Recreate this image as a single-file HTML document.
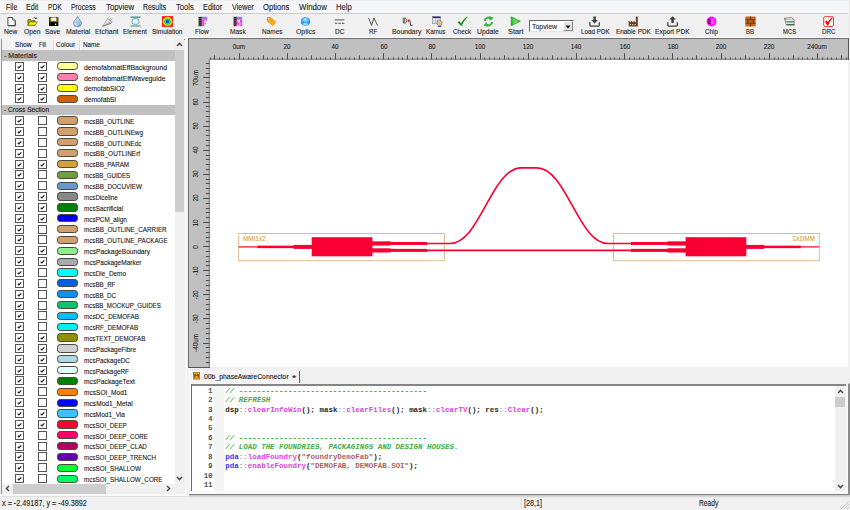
<!DOCTYPE html>
<html><head><meta charset="utf-8"><title>UI</title>
<style>
html,body{margin:0;padding:0}
body{width:850px;height:510px;overflow:hidden;position:relative;background:#f0f0f0;font-family:"Liberation Sans", sans-serif;-webkit-font-smoothing:antialiased}
.t{position:absolute;white-space:nowrap;height:10px;line-height:10px;-webkit-text-stroke:0.1px}
</style></head><body>
<div style="position:absolute;left:0px;top:0px;width:850px;height:13px;background:#f5f6f7"></div>
<div style="position:absolute;left:0px;top:0px;width:850px;height:0.8px;background:#ececec"></div>
<div style="position:absolute;left:0px;top:0px;width:0.8px;height:38px;background:#fbfbfb"></div>
<div style="position:absolute;left:848.6px;top:0px;width:1.4px;height:38px;background:#e6e6e6"></div>
<div style="position:absolute;left:0px;top:13px;width:848px;height:0.9px;background:#cdcdcd"></div>
<div style="position:absolute;left:0px;top:13.9px;width:848.6px;height:24.1px;background:#f0f0f0"></div>
<div style="position:absolute;left:0px;top:36.8px;width:848.6px;height:1px;background:#fafafa"></div>
<svg style="position:absolute;left:5.7px;top:16px" width="11" height="11" viewBox="0 0 11 11"><path d="M1.9 1.5H6.5L9.1 4.1V9.6H1.9Z" fill="#fff" stroke="#3a3a3a" stroke-width="0.9"/><path d="M6.5 1.5V4.1H9.1" fill="#ddd" stroke="#3a3a3a" stroke-width="0.7"/><path d="M2.2 9.9H9.4V4.6" fill="none" stroke="#222" stroke-width="0.5"/></svg>
<svg style="position:absolute;left:26.5px;top:16px" width="11" height="11" viewBox="0 0 11 11"><path d="M0.9 3.6H3.9L4.8 4.6H8.1V9.3H0.9Z" fill="#a8a800" stroke="#4a4a00" stroke-width="0.6"/><path d="M0.9 9.3L2.7 5.9H10.3L8.1 9.3Z" fill="#f4f400" stroke="#5a5a00" stroke-width="0.6"/><path d="M6 2.6C6.8 1.4 8.2 1.3 9 2.3" fill="none" stroke="#222" stroke-width="0.7"/><path d="M9.6 1.2V3H7.9Z" fill="#111"/></svg>
<svg style="position:absolute;left:47.5px;top:16px" width="11" height="11" viewBox="0 0 11 11"><rect x="1" y="1.2" width="9.4" height="8.8" fill="#141400"/><rect x="1.7" y="1.6" width="8" height="4.2" fill="#8a8a00"/><rect x="3.2" y="1.6" width="4.9" height="3.3" fill="#f4f4f4"/><rect x="3" y="6.6" width="5.2" height="3.4" fill="#000"/><rect x="6.9" y="7.6" width="1.2" height="1.5" fill="#e8e8e8"/></svg>
<svg style="position:absolute;left:72.3px;top:16px" width="11" height="11" viewBox="0 0 11 11"><defs><linearGradient id="mg" x1="0" y1="0" x2="1" y2="1"><stop offset="0" stop-color="#dcebfa"/><stop offset="1" stop-color="#7ea9d8"/></linearGradient></defs><ellipse cx="5.6" cy="10.4" rx="3.6" ry="0.6" fill="#bbb"/><path d="M5.5 0.5C6.5 3 9.5 5 9.5 7.3A4 3.3 0 0 1 1.5 7.3C1.5 5 4.5 3 5.5 0.5Z" fill="url(#mg)" stroke="#5682ba" stroke-width="0.7"/><path d="M3.1 7.4A2.3 2 0 0 0 5.2 9.3" stroke="#f4f9ff" stroke-width="0.9" fill="none"/></svg>
<svg style="position:absolute;left:101.5px;top:16px" width="11" height="11" viewBox="0 0 11 11"><path d="M0.6 10.4L5.6 2.4L10.2 5.8L9.2 7.2Z" fill="#e2e2e2" stroke="#8e8e8e" stroke-width="0.6"/><path d="M5.6 2.4L7.4 0.8M7.2 3.6L9 1.6M8.6 4.6L10.4 2.6M2.6 9.2L8.4 6" stroke="#8e8e8e" stroke-width="0.6" fill="none"/><path d="M0.6 10.4L9.2 7.2" stroke="#6a6a6a" stroke-width="0.7"/></svg>
<svg style="position:absolute;left:129.7px;top:16px" width="11" height="11" viewBox="0 0 11 11"><path d="M0.4 1.1H10.6M0.4 10H10.6" stroke="#2f8f8f" stroke-width="1.1"/><rect x="2.1" y="2.8" width="6.8" height="5.4" rx="1.7" fill="#eef8f8" stroke="#4aa6a6" stroke-width="0.9"/></svg>
<svg style="position:absolute;left:161.7px;top:16px" width="11" height="11" viewBox="0 0 11 11"><defs><radialGradient id="rg"><stop offset="0" stop-color="#7a00d0"/><stop offset="0.2" stop-color="#2040ff"/><stop offset="0.38" stop-color="#00c8e0"/><stop offset="0.55" stop-color="#20e020"/><stop offset="0.72" stop-color="#f0f000"/><stop offset="0.88" stop-color="#ff8000"/><stop offset="1" stop-color="#ff1010"/></radialGradient></defs><rect x="0.2" y="0.3" width="10.6" height="10.4" fill="#ff2010"/><rect x="0.2" y="0.3" width="10.6" height="10.4" fill="url(#rg)"/></svg>
<svg style="position:absolute;left:197.7px;top:16px" width="11" height="11" viewBox="0 0 11 11"><rect x="0.6" y="0.8" width="3.2" height="9.4" fill="#222"/><rect x="3.8" y="0.8" width="5.4" height="3" fill="#9a7ae0"/><path d="M1 2.4h2.4M1 4.6h2.4M1 6.8h2.4M1 9h2.4" stroke="#777" stroke-width="0.6"/><text x="3.6" y="10.4" font-family="Liberation Serif" font-weight="bold" font-size="9" fill="#ff10e0">F</text></svg>
<svg style="position:absolute;left:232.5px;top:16px" width="11" height="11" viewBox="0 0 11 11"><rect x="0.6" y="0.8" width="3.2" height="9.4" fill="#222"/><rect x="3.8" y="0.8" width="5.4" height="3" fill="#9a7ae0"/><path d="M1 2.4h2.4M1 4.6h2.4M1 6.8h2.4M1 9h2.4" stroke="#777" stroke-width="0.6"/><text x="1.8" y="10.4" font-family="Liberation Serif" font-weight="bold" font-size="8.6" fill="#ff10e0">M</text></svg>
<svg style="position:absolute;left:266px;top:16px" width="11" height="11" viewBox="0 0 11 11"><path d="M0.8 1H4.8L10.4 6.2L6.6 10.2L0.8 4.6Z" fill="#f5a81c"/><circle cx="2.4" cy="2.6" r="0.8" fill="#f0f0f0"/><path d="M1.6 2.2C0.6 3.6 1.2 5.6 2.6 6.2" stroke="#888" stroke-width="0.5" fill="none"/></svg>
<svg style="position:absolute;left:299.8px;top:16px" width="11" height="11" viewBox="0 0 11 11"><defs><radialGradient id="og" cx="0.5" cy="0.3" r="0.7"><stop offset="0" stop-color="#c8ecff"/><stop offset="0.5" stop-color="#3aa8f0"/><stop offset="1" stop-color="#1488e0"/></radialGradient></defs><ellipse cx="5.5" cy="5.4" rx="4.7" ry="4.4" fill="url(#og)"/><ellipse cx="5.5" cy="8.2" rx="2.6" ry="1.1" fill="#b8e4ff" opacity="0.8"/></svg>
<svg style="position:absolute;left:333.7px;top:16px" width="11" height="11" viewBox="0 0 11 11"><path d="M0.8 3.9H10.3" stroke="#444" stroke-width="0.9"/><path d="M0.8 7.3H3.4M4.3 7.3H6.9M7.8 7.3H10.3" stroke="#444" stroke-width="0.9"/></svg>
<svg style="position:absolute;left:367.6px;top:16px" width="11" height="11" viewBox="0 0 11 11"><path d="M0.6 2L3.6 9.4L5.9 2L9.6 9.4" stroke="#444" stroke-width="0.9" fill="none"/></svg>
<svg style="position:absolute;left:401.5px;top:16px" width="11" height="11" viewBox="0 0 11 11"><path d="M1.3 1.6V7.4M2.7 1.6V7.4M2.7 2C5.4 2.2 5.4 7 2.7 7.2" stroke="#3a3a3a" stroke-width="0.8" fill="none"/><rect x="5.7" y="3.4" width="1.3" height="2.6" fill="#e02020"/><path d="M7.8 3.6L8.6 9.4H10.6" stroke="#333" stroke-width="0.9" fill="none"/></svg>
<svg style="position:absolute;left:431.5px;top:16px" width="11" height="11" viewBox="0 0 11 11"><rect x="0.6" y="0.6" width="7.8" height="7.2" fill="#f4f4f4" stroke="#707070" stroke-width="0.5"/><rect x="0.6" y="0.6" width="7.8" height="1.6" fill="#2424a8"/><path d="M3.6 2.2V7.6M0.8 4.2H8.2M0.8 6H8.2" stroke="#9a9a9a" stroke-width="0.5"/><path d="M5 6.6C5 4.4 6.2 3.6 7 4.2C8 3.4 10.2 5 10 7.4C9.8 9.4 9 10.2 7.4 10C5.8 9.8 5 8.6 5 6.6Z" fill="#d2ca92" stroke="#5e5624" stroke-width="0.5"/><path d="M5.8 10.4H9.4" stroke="#2424a8" stroke-width="0.8"/></svg>
<svg style="position:absolute;left:456.5px;top:16px" width="11" height="11" viewBox="0 0 11 11"><path d="M0.6 6.4L2.2 5L4 7.2C5.6 4.4 7.8 2 10.4 0.4L10.6 0.9C8.4 3.2 6.2 6.4 4.4 10.2Z" fill="#129412"/></svg>
<svg style="position:absolute;left:483.3px;top:16px" width="11" height="11" viewBox="0 0 11 11"><path d="M1.8 5A3.7 3.7 0 0 1 8 2.6" stroke="#3cb03c" stroke-width="2.1" fill="none"/><path d="M6.2 0.2L10.6 1.6L7.6 5Z" fill="#3cb03c"/><path d="M9.2 6A3.7 3.7 0 0 1 3 8.4" stroke="#3cb03c" stroke-width="2.1" fill="none"/><path d="M4.8 10.8L0.4 9.4L3.4 6Z" fill="#3cb03c"/></svg>
<svg style="position:absolute;left:509.9px;top:16px" width="11" height="11" viewBox="0 0 11 11"><defs><linearGradient id="sg" x1="0" y1="0" x2="1" y2="0"><stop offset="0" stop-color="#2cb02c"/><stop offset="0.5" stop-color="#66e866"/><stop offset="1" stop-color="#2cb02c"/></linearGradient></defs><path d="M1.2 0.8L10.2 5.2L1.2 9.8Z" fill="url(#sg)" stroke="#1e9a1e" stroke-width="0.7"/></svg>
<svg style="position:absolute;left:589.2px;top:16px" width="11" height="11" viewBox="0 0 11 11"><path d="M4.4 0.4H6.8V4H8.9L5.6 7.4L2.3 4H4.4Z" fill="#3c3c3c"/><path d="M0.9 6.2V9.2Q0.9 10 1.7 10H9.5Q10.3 10 10.3 9.2V6.2" stroke="#3c3c3c" stroke-width="1.25" fill="none"/></svg>
<svg style="position:absolute;left:628px;top:16px" width="11" height="11" viewBox="0 0 11 11"><path d="M0.6 10.4V4.8L3 6.6V4.8L5.4 6.6V4.8L7.8 6.6V0.6H9.8V10.4Z" fill="#6a3e26"/><path d="M1.8 8.6h1.1M4.2 8.6h1.1M6.6 8.6h1.1" stroke="#f0e4d8" stroke-width="1.1"/></svg>
<svg style="position:absolute;left:666.8px;top:16px" width="11" height="11" viewBox="0 0 11 11"><path d="M4.4 7H6.8V3.6H8.9L5.6 0.2L2.3 3.6H4.4Z" fill="#3c3c3c"/><path d="M0.9 6.2V9.2Q0.9 10 1.7 10H9.5Q10.3 10 10.3 9.2V6.2" stroke="#3c3c3c" stroke-width="1.25" fill="none"/></svg>
<svg style="position:absolute;left:706.1px;top:16px" width="11" height="11" viewBox="0 0 11 11"><circle cx="5.5" cy="5.5" r="4.9" fill="#ff10f0"/><path d="M2 3.6H5M2 5.5H5M2 7.4H5" stroke="#111" stroke-width="1.1"/><path d="M5.2 3.6H8.2M5.2 5.5H8.2M5.2 7.4H8.2" stroke="#ffd0ff" stroke-width="0.7"/></svg>
<svg style="position:absolute;left:744.7px;top:16px" width="11" height="11" viewBox="0 0 11 11"><rect x="0.3" y="0.4" width="10.4" height="10.2" rx="1.2" fill="#c8681a"/><path d="M0.3 3.8H10.7M0.3 7.2H10.7M5.5 0.4V3.8M2.8 3.8V7.2M8.2 3.8V7.2M5.5 7.2V10.6" stroke="#5a2a08" stroke-width="0.8"/></svg>
<svg style="position:absolute;left:783.9px;top:16px" width="11" height="11" viewBox="0 0 11 11"><path d="M0.5 2.3L7.6 1.5L10.2 3.9H2.3Z" fill="#f6f6f6" stroke="#444" stroke-width="0.6"/><path d="M0.5 2.3L2.3 8.6" stroke="#444" stroke-width="0.6"/><rect x="2.3" y="3.9" width="7.9" height="1.3" fill="#fafafa"/><rect x="2.3" y="5.1" width="7.9" height="1.6" fill="#25a64e"/><rect x="2.3" y="6.7" width="7.9" height="1.5" fill="#e4e4e4"/><path d="M2.3 8.8H10.5" stroke="#1a1a1a" stroke-width="1"/><path d="M10.2 3.9V8.6" stroke="#555" stroke-width="0.5"/></svg>
<svg style="position:absolute;left:822.8px;top:16px" width="11" height="11" viewBox="0 0 11 11"><rect x="0.7" y="0.7" width="9.8" height="9.8" rx="1.4" fill="#fff6f6" stroke="#ee3a3a" stroke-width="1"/><path d="M2 5.4L3.6 4.4L4.8 6.2C5.8 4.2 7.6 2.4 9.8 1.2L10 1.8C8.2 3.6 6.4 6.2 5.2 9.4H4.2Z" fill="#e00a0a"/></svg>
<div style="position:absolute;left:529.3px;top:20px;width:45.2px;height:12px;background:#fff;border:1.3px solid #6a6a6a;border-right-color:#e4e4e4;border-bottom-color:#e4e4e4;box-sizing:border-box"></div>
<div style="position:absolute;left:563.2px;top:21.3px;width:10px;height:9.6px;background:#e4e4e4;border:1px solid #fff;border-right-color:#8a8a8a;border-bottom-color:#8a8a8a;box-sizing:border-box"></div>
<svg style="position:absolute;left:565.4px;top:24.6px" width="6" height="4" viewBox="0 0 6 4"><path d="M0.5 0.5h5L3 3.5z" fill="#000"/></svg>
<div style="position:absolute;left:0px;top:38px;width:185px;height:458px;background:#f0f0f0"></div>
<div style="position:absolute;left:1px;top:38.9px;width:184px;height:1px;background:#8a8a8a"></div>
<div style="position:absolute;left:0.9px;top:39px;width:1.3px;height:455px;background:#969696"></div>
<div style="position:absolute;left:2px;top:39px;width:172.5px;height:445px;background:#ffffff"></div>
<div style="position:absolute;left:2px;top:39.9px;width:172.5px;height:10.2px;background:#f2f2f2"></div>
<div style="position:absolute;left:11.6px;top:40.2px;width:0.7px;height:9.6px;background:#dddddd"></div>
<div style="position:absolute;left:12.3px;top:40.2px;width:0.9px;height:9.6px;background:#ffffff"></div>
<div style="position:absolute;left:35.5px;top:40.2px;width:0.7px;height:9.6px;background:#dddddd"></div>
<div style="position:absolute;left:36.2px;top:40.2px;width:0.9px;height:9.6px;background:#ffffff"></div>
<div style="position:absolute;left:52.8px;top:40.2px;width:0.7px;height:9.6px;background:#dddddd"></div>
<div style="position:absolute;left:53.5px;top:40.2px;width:0.9px;height:9.6px;background:#ffffff"></div>
<div style="position:absolute;left:79.4px;top:40.2px;width:0.7px;height:9.6px;background:#dddddd"></div>
<div style="position:absolute;left:80.1px;top:40.2px;width:0.9px;height:9.6px;background:#ffffff"></div>
<div style="position:absolute;left:2px;top:50.4px;width:172.5px;height:10.2px;background:#c0c0c0"></div>
<div style="position:absolute;left:14.7px;top:62px;width:9.3px;height:9px;background:#fff;border:1px solid #555;box-sizing:border-box"></div>
<svg style="position:absolute;left:14.9px;top:62.3px" width="9" height="9" viewBox="0 0 9 9"><path d="M2.7 4.7 L3.9 5.9 L6.3 3.3" stroke="#222" stroke-width="1.25" fill="none"/></svg>
<div style="position:absolute;left:38px;top:62px;width:9.3px;height:9px;background:#fff;border:1px solid #555;box-sizing:border-box"></div>
<svg style="position:absolute;left:38.2px;top:62.3px" width="9" height="9" viewBox="0 0 9 9"><path d="M2.7 4.7 L3.9 5.9 L6.3 3.3" stroke="#222" stroke-width="1.25" fill="none"/></svg>
<div style="position:absolute;left:57.1px;top:62.2px;width:20.7px;height:8.3px;background:#ffff99;border:0.8px solid #4a4a3a;border-radius:3.3px;box-sizing:border-box"></div>
<div style="position:absolute;left:14.7px;top:73px;width:9.3px;height:9px;background:#fff;border:1px solid #555;box-sizing:border-box"></div>
<svg style="position:absolute;left:14.9px;top:73.3px" width="9" height="9" viewBox="0 0 9 9"><path d="M2.7 4.7 L3.9 5.9 L6.3 3.3" stroke="#222" stroke-width="1.25" fill="none"/></svg>
<div style="position:absolute;left:38px;top:73px;width:9.3px;height:9px;background:#fff;border:1px solid #555;box-sizing:border-box"></div>
<svg style="position:absolute;left:38.2px;top:73.3px" width="9" height="9" viewBox="0 0 9 9"><path d="M2.7 4.7 L3.9 5.9 L6.3 3.3" stroke="#222" stroke-width="1.25" fill="none"/></svg>
<div style="position:absolute;left:57.1px;top:73.05px;width:20.7px;height:8.3px;background:#ff80b0;border:0.8px solid #4a4a3a;border-radius:3.3px;box-sizing:border-box"></div>
<div style="position:absolute;left:14.7px;top:84px;width:9.3px;height:9px;background:#fff;border:1px solid #555;box-sizing:border-box"></div>
<svg style="position:absolute;left:14.9px;top:84.3px" width="9" height="9" viewBox="0 0 9 9"><path d="M2.7 4.7 L3.9 5.9 L6.3 3.3" stroke="#222" stroke-width="1.25" fill="none"/></svg>
<div style="position:absolute;left:38px;top:84px;width:9.3px;height:9px;background:#fff;border:1px solid #555;box-sizing:border-box"></div>
<svg style="position:absolute;left:38.2px;top:84.3px" width="9" height="9" viewBox="0 0 9 9"><path d="M2.7 4.7 L3.9 5.9 L6.3 3.3" stroke="#222" stroke-width="1.25" fill="none"/></svg>
<div style="position:absolute;left:57.1px;top:83.9px;width:20.7px;height:8.3px;background:#ffff00;border:0.8px solid #4a4a3a;border-radius:3.3px;box-sizing:border-box"></div>
<div style="position:absolute;left:14.7px;top:94px;width:9.3px;height:9px;background:#fff;border:1px solid #555;box-sizing:border-box"></div>
<svg style="position:absolute;left:14.9px;top:94.3px" width="9" height="9" viewBox="0 0 9 9"><path d="M2.7 4.7 L3.9 5.9 L6.3 3.3" stroke="#222" stroke-width="1.25" fill="none"/></svg>
<div style="position:absolute;left:38px;top:94px;width:9.3px;height:9px;background:#fff;border:1px solid #555;box-sizing:border-box"></div>
<svg style="position:absolute;left:38.2px;top:94.3px" width="9" height="9" viewBox="0 0 9 9"><path d="M2.7 4.7 L3.9 5.9 L6.3 3.3" stroke="#222" stroke-width="1.25" fill="none"/></svg>
<div style="position:absolute;left:57.1px;top:94.75px;width:20.7px;height:8.3px;background:#d06000;border:0.8px solid #4a4a3a;border-radius:3.3px;box-sizing:border-box"></div>
<div style="position:absolute;left:2px;top:104.65px;width:172.5px;height:10.2px;background:#c0c0c0"></div>
<div style="position:absolute;left:14.7px;top:116px;width:9.3px;height:9px;background:#fff;border:1px solid #555;box-sizing:border-box"></div>
<svg style="position:absolute;left:14.9px;top:116.3px" width="9" height="9" viewBox="0 0 9 9"><path d="M2.7 4.7 L3.9 5.9 L6.3 3.3" stroke="#222" stroke-width="1.25" fill="none"/></svg>
<div style="position:absolute;left:38px;top:116px;width:9.3px;height:9px;background:#fff;border:1px solid #555;box-sizing:border-box"></div>
<div style="position:absolute;left:57.1px;top:116.45px;width:20.7px;height:8.3px;background:#d2a06e;border:0.8px solid #4a4a3a;border-radius:3.3px;box-sizing:border-box"></div>
<div style="position:absolute;left:14.7px;top:127px;width:9.3px;height:9px;background:#fff;border:1px solid #555;box-sizing:border-box"></div>
<svg style="position:absolute;left:14.9px;top:127.3px" width="9" height="9" viewBox="0 0 9 9"><path d="M2.7 4.7 L3.9 5.9 L6.3 3.3" stroke="#222" stroke-width="1.25" fill="none"/></svg>
<div style="position:absolute;left:38px;top:127px;width:9.3px;height:9px;background:#fff;border:1px solid #555;box-sizing:border-box"></div>
<div style="position:absolute;left:57.1px;top:127.3px;width:20.7px;height:8.3px;background:#d2a06e;border:0.8px solid #4a4a3a;border-radius:3.3px;box-sizing:border-box"></div>
<div style="position:absolute;left:14.7px;top:138px;width:9.3px;height:9px;background:#fff;border:1px solid #555;box-sizing:border-box"></div>
<svg style="position:absolute;left:14.9px;top:138.3px" width="9" height="9" viewBox="0 0 9 9"><path d="M2.7 4.7 L3.9 5.9 L6.3 3.3" stroke="#222" stroke-width="1.25" fill="none"/></svg>
<div style="position:absolute;left:38px;top:138px;width:9.3px;height:9px;background:#fff;border:1px solid #555;box-sizing:border-box"></div>
<div style="position:absolute;left:57.1px;top:138.15px;width:20.7px;height:8.3px;background:#d2a06e;border:0.8px solid #4a4a3a;border-radius:3.3px;box-sizing:border-box"></div>
<div style="position:absolute;left:14.7px;top:149px;width:9.3px;height:9px;background:#fff;border:1px solid #555;box-sizing:border-box"></div>
<svg style="position:absolute;left:14.9px;top:149.3px" width="9" height="9" viewBox="0 0 9 9"><path d="M2.7 4.7 L3.9 5.9 L6.3 3.3" stroke="#222" stroke-width="1.25" fill="none"/></svg>
<div style="position:absolute;left:38px;top:149px;width:9.3px;height:9px;background:#fff;border:1px solid #555;box-sizing:border-box"></div>
<div style="position:absolute;left:57.1px;top:149px;width:20.7px;height:8.3px;background:#d2a06e;border:0.8px solid #4a4a3a;border-radius:3.3px;box-sizing:border-box"></div>
<div style="position:absolute;left:14.7px;top:160px;width:9.3px;height:9px;background:#fff;border:1px solid #555;box-sizing:border-box"></div>
<svg style="position:absolute;left:14.9px;top:160.3px" width="9" height="9" viewBox="0 0 9 9"><path d="M2.7 4.7 L3.9 5.9 L6.3 3.3" stroke="#222" stroke-width="1.25" fill="none"/></svg>
<div style="position:absolute;left:38px;top:160px;width:9.3px;height:9px;background:#fff;border:1px solid #555;box-sizing:border-box"></div>
<svg style="position:absolute;left:38.2px;top:160.3px" width="9" height="9" viewBox="0 0 9 9"><path d="M2.7 4.7 L3.9 5.9 L6.3 3.3" stroke="#222" stroke-width="1.25" fill="none"/></svg>
<div style="position:absolute;left:57.1px;top:159.85px;width:20.7px;height:8.3px;background:#d4a03c;border:0.8px solid #4a4a3a;border-radius:3.3px;box-sizing:border-box"></div>
<div style="position:absolute;left:14.7px;top:170px;width:9.3px;height:9px;background:#fff;border:1px solid #555;box-sizing:border-box"></div>
<svg style="position:absolute;left:14.9px;top:170.3px" width="9" height="9" viewBox="0 0 9 9"><path d="M2.7 4.7 L3.9 5.9 L6.3 3.3" stroke="#222" stroke-width="1.25" fill="none"/></svg>
<div style="position:absolute;left:38px;top:170px;width:9.3px;height:9px;background:#fff;border:1px solid #555;box-sizing:border-box"></div>
<div style="position:absolute;left:57.1px;top:170.7px;width:20.7px;height:8.3px;background:#6ea03c;border:0.8px solid #4a4a3a;border-radius:3.3px;box-sizing:border-box"></div>
<div style="position:absolute;left:14.7px;top:181px;width:9.3px;height:9px;background:#fff;border:1px solid #555;box-sizing:border-box"></div>
<svg style="position:absolute;left:14.9px;top:181.3px" width="9" height="9" viewBox="0 0 9 9"><path d="M2.7 4.7 L3.9 5.9 L6.3 3.3" stroke="#222" stroke-width="1.25" fill="none"/></svg>
<div style="position:absolute;left:38px;top:181px;width:9.3px;height:9px;background:#fff;border:1px solid #555;box-sizing:border-box"></div>
<div style="position:absolute;left:57.1px;top:181.55px;width:20.7px;height:8.3px;background:#6699cc;border:0.8px solid #4a4a3a;border-radius:3.3px;box-sizing:border-box"></div>
<div style="position:absolute;left:14.7px;top:192px;width:9.3px;height:9px;background:#fff;border:1px solid #555;box-sizing:border-box"></div>
<svg style="position:absolute;left:14.9px;top:192.3px" width="9" height="9" viewBox="0 0 9 9"><path d="M2.7 4.7 L3.9 5.9 L6.3 3.3" stroke="#222" stroke-width="1.25" fill="none"/></svg>
<div style="position:absolute;left:38px;top:192px;width:9.3px;height:9px;background:#fff;border:1px solid #555;box-sizing:border-box"></div>
<svg style="position:absolute;left:38.2px;top:192.3px" width="9" height="9" viewBox="0 0 9 9"><path d="M2.7 4.7 L3.9 5.9 L6.3 3.3" stroke="#222" stroke-width="1.25" fill="none"/></svg>
<div style="position:absolute;left:57.1px;top:192.4px;width:20.7px;height:8.3px;background:#888888;border:0.8px solid #4a4a3a;border-radius:3.3px;box-sizing:border-box"></div>
<div style="position:absolute;left:14.7px;top:203px;width:9.3px;height:9px;background:#fff;border:1px solid #555;box-sizing:border-box"></div>
<svg style="position:absolute;left:14.9px;top:203.3px" width="9" height="9" viewBox="0 0 9 9"><path d="M2.7 4.7 L3.9 5.9 L6.3 3.3" stroke="#222" stroke-width="1.25" fill="none"/></svg>
<div style="position:absolute;left:38px;top:203px;width:9.3px;height:9px;background:#fff;border:1px solid #555;box-sizing:border-box"></div>
<svg style="position:absolute;left:38.2px;top:203.3px" width="9" height="9" viewBox="0 0 9 9"><path d="M2.7 4.7 L3.9 5.9 L6.3 3.3" stroke="#222" stroke-width="1.25" fill="none"/></svg>
<div style="position:absolute;left:57.1px;top:203.25px;width:20.7px;height:8.3px;background:#008000;border:0.8px solid #4a4a3a;border-radius:3.3px;box-sizing:border-box"></div>
<div style="position:absolute;left:14.7px;top:214px;width:9.3px;height:9px;background:#fff;border:1px solid #555;box-sizing:border-box"></div>
<svg style="position:absolute;left:14.9px;top:214.3px" width="9" height="9" viewBox="0 0 9 9"><path d="M2.7 4.7 L3.9 5.9 L6.3 3.3" stroke="#222" stroke-width="1.25" fill="none"/></svg>
<div style="position:absolute;left:38px;top:214px;width:9.3px;height:9px;background:#fff;border:1px solid #555;box-sizing:border-box"></div>
<svg style="position:absolute;left:38.2px;top:214.3px" width="9" height="9" viewBox="0 0 9 9"><path d="M2.7 4.7 L3.9 5.9 L6.3 3.3" stroke="#222" stroke-width="1.25" fill="none"/></svg>
<div style="position:absolute;left:57.1px;top:214.1px;width:20.7px;height:8.3px;background:#0000ee;border:0.8px solid #4a4a3a;border-radius:3.3px;box-sizing:border-box"></div>
<div style="position:absolute;left:14.7px;top:225px;width:9.3px;height:9px;background:#fff;border:1px solid #555;box-sizing:border-box"></div>
<svg style="position:absolute;left:14.9px;top:225.3px" width="9" height="9" viewBox="0 0 9 9"><path d="M2.7 4.7 L3.9 5.9 L6.3 3.3" stroke="#222" stroke-width="1.25" fill="none"/></svg>
<div style="position:absolute;left:38px;top:225px;width:9.3px;height:9px;background:#fff;border:1px solid #555;box-sizing:border-box"></div>
<div style="position:absolute;left:57.1px;top:224.95px;width:20.7px;height:8.3px;background:#d2a06e;border:0.8px solid #4a4a3a;border-radius:3.3px;box-sizing:border-box"></div>
<div style="position:absolute;left:14.7px;top:235px;width:9.3px;height:9px;background:#fff;border:1px solid #555;box-sizing:border-box"></div>
<svg style="position:absolute;left:14.9px;top:235.3px" width="9" height="9" viewBox="0 0 9 9"><path d="M2.7 4.7 L3.9 5.9 L6.3 3.3" stroke="#222" stroke-width="1.25" fill="none"/></svg>
<div style="position:absolute;left:38px;top:235px;width:9.3px;height:9px;background:#fff;border:1px solid #555;box-sizing:border-box"></div>
<div style="position:absolute;left:57.1px;top:235.8px;width:20.7px;height:8.3px;background:#d2a06e;border:0.8px solid #4a4a3a;border-radius:3.3px;box-sizing:border-box"></div>
<div style="position:absolute;left:14.7px;top:246px;width:9.3px;height:9px;background:#fff;border:1px solid #555;box-sizing:border-box"></div>
<svg style="position:absolute;left:14.9px;top:246.3px" width="9" height="9" viewBox="0 0 9 9"><path d="M2.7 4.7 L3.9 5.9 L6.3 3.3" stroke="#222" stroke-width="1.25" fill="none"/></svg>
<div style="position:absolute;left:38px;top:246px;width:9.3px;height:9px;background:#fff;border:1px solid #555;box-sizing:border-box"></div>
<svg style="position:absolute;left:38.2px;top:246.3px" width="9" height="9" viewBox="0 0 9 9"><path d="M2.7 4.7 L3.9 5.9 L6.3 3.3" stroke="#222" stroke-width="1.25" fill="none"/></svg>
<div style="position:absolute;left:57.1px;top:246.65px;width:20.7px;height:8.3px;background:#90ee90;border:0.8px solid #4a4a3a;border-radius:3.3px;box-sizing:border-box"></div>
<div style="position:absolute;left:14.7px;top:257px;width:9.3px;height:9px;background:#fff;border:1px solid #555;box-sizing:border-box"></div>
<svg style="position:absolute;left:14.9px;top:257.3px" width="9" height="9" viewBox="0 0 9 9"><path d="M2.7 4.7 L3.9 5.9 L6.3 3.3" stroke="#222" stroke-width="1.25" fill="none"/></svg>
<div style="position:absolute;left:38px;top:257px;width:9.3px;height:9px;background:#fff;border:1px solid #555;box-sizing:border-box"></div>
<svg style="position:absolute;left:38.2px;top:257.3px" width="9" height="9" viewBox="0 0 9 9"><path d="M2.7 4.7 L3.9 5.9 L6.3 3.3" stroke="#222" stroke-width="1.25" fill="none"/></svg>
<div style="position:absolute;left:57.1px;top:257.5px;width:20.7px;height:8.3px;background:#aaaaaa;border:0.8px solid #4a4a3a;border-radius:3.3px;box-sizing:border-box"></div>
<div style="position:absolute;left:14.7px;top:268px;width:9.3px;height:9px;background:#fff;border:1px solid #555;box-sizing:border-box"></div>
<svg style="position:absolute;left:14.9px;top:268.3px" width="9" height="9" viewBox="0 0 9 9"><path d="M2.7 4.7 L3.9 5.9 L6.3 3.3" stroke="#222" stroke-width="1.25" fill="none"/></svg>
<div style="position:absolute;left:38px;top:268px;width:9.3px;height:9px;background:#fff;border:1px solid #555;box-sizing:border-box"></div>
<div style="position:absolute;left:57.1px;top:268.35px;width:20.7px;height:8.3px;background:#00ffff;border:0.8px solid #4a4a3a;border-radius:3.3px;box-sizing:border-box"></div>
<div style="position:absolute;left:14.7px;top:279px;width:9.3px;height:9px;background:#fff;border:1px solid #555;box-sizing:border-box"></div>
<svg style="position:absolute;left:14.9px;top:279.3px" width="9" height="9" viewBox="0 0 9 9"><path d="M2.7 4.7 L3.9 5.9 L6.3 3.3" stroke="#222" stroke-width="1.25" fill="none"/></svg>
<div style="position:absolute;left:38px;top:279px;width:9.3px;height:9px;background:#fff;border:1px solid #555;box-sizing:border-box"></div>
<div style="position:absolute;left:57.1px;top:279.2px;width:20.7px;height:8.3px;background:#0060e0;border:0.8px solid #4a4a3a;border-radius:3.3px;box-sizing:border-box"></div>
<div style="position:absolute;left:14.7px;top:290px;width:9.3px;height:9px;background:#fff;border:1px solid #555;box-sizing:border-box"></div>
<svg style="position:absolute;left:14.9px;top:290.3px" width="9" height="9" viewBox="0 0 9 9"><path d="M2.7 4.7 L3.9 5.9 L6.3 3.3" stroke="#222" stroke-width="1.25" fill="none"/></svg>
<div style="position:absolute;left:38px;top:290px;width:9.3px;height:9px;background:#fff;border:1px solid #555;box-sizing:border-box"></div>
<div style="position:absolute;left:57.1px;top:290.05px;width:20.7px;height:8.3px;background:#1090f0;border:0.8px solid #4a4a3a;border-radius:3.3px;box-sizing:border-box"></div>
<div style="position:absolute;left:14.7px;top:301px;width:9.3px;height:9px;background:#fff;border:1px solid #555;box-sizing:border-box"></div>
<svg style="position:absolute;left:14.9px;top:301.3px" width="9" height="9" viewBox="0 0 9 9"><path d="M2.7 4.7 L3.9 5.9 L6.3 3.3" stroke="#222" stroke-width="1.25" fill="none"/></svg>
<div style="position:absolute;left:38px;top:301px;width:9.3px;height:9px;background:#fff;border:1px solid #555;box-sizing:border-box"></div>
<div style="position:absolute;left:57.1px;top:300.9px;width:20.7px;height:8.3px;background:#10c070;border:0.8px solid #4a4a3a;border-radius:3.3px;box-sizing:border-box"></div>
<div style="position:absolute;left:14.7px;top:311px;width:9.3px;height:9px;background:#fff;border:1px solid #555;box-sizing:border-box"></div>
<svg style="position:absolute;left:14.9px;top:311.3px" width="9" height="9" viewBox="0 0 9 9"><path d="M2.7 4.7 L3.9 5.9 L6.3 3.3" stroke="#222" stroke-width="1.25" fill="none"/></svg>
<div style="position:absolute;left:38px;top:311px;width:9.3px;height:9px;background:#fff;border:1px solid #555;box-sizing:border-box"></div>
<div style="position:absolute;left:57.1px;top:311.75px;width:20.7px;height:8.3px;background:#00c0ff;border:0.8px solid #4a4a3a;border-radius:3.3px;box-sizing:border-box"></div>
<div style="position:absolute;left:14.7px;top:322px;width:9.3px;height:9px;background:#fff;border:1px solid #555;box-sizing:border-box"></div>
<svg style="position:absolute;left:14.9px;top:322.3px" width="9" height="9" viewBox="0 0 9 9"><path d="M2.7 4.7 L3.9 5.9 L6.3 3.3" stroke="#222" stroke-width="1.25" fill="none"/></svg>
<div style="position:absolute;left:38px;top:322px;width:9.3px;height:9px;background:#fff;border:1px solid #555;box-sizing:border-box"></div>
<div style="position:absolute;left:57.1px;top:322.6px;width:20.7px;height:8.3px;background:#00f0f0;border:0.8px solid #4a4a3a;border-radius:3.3px;box-sizing:border-box"></div>
<div style="position:absolute;left:14.7px;top:333px;width:9.3px;height:9px;background:#fff;border:1px solid #555;box-sizing:border-box"></div>
<svg style="position:absolute;left:14.9px;top:333.3px" width="9" height="9" viewBox="0 0 9 9"><path d="M2.7 4.7 L3.9 5.9 L6.3 3.3" stroke="#222" stroke-width="1.25" fill="none"/></svg>
<div style="position:absolute;left:38px;top:333px;width:9.3px;height:9px;background:#fff;border:1px solid #555;box-sizing:border-box"></div>
<svg style="position:absolute;left:38.2px;top:333.3px" width="9" height="9" viewBox="0 0 9 9"><path d="M2.7 4.7 L3.9 5.9 L6.3 3.3" stroke="#222" stroke-width="1.25" fill="none"/></svg>
<div style="position:absolute;left:57.1px;top:333.45px;width:20.7px;height:8.3px;background:#909000;border:0.8px solid #4a4a3a;border-radius:3.3px;box-sizing:border-box"></div>
<div style="position:absolute;left:14.7px;top:344px;width:9.3px;height:9px;background:#fff;border:1px solid #555;box-sizing:border-box"></div>
<svg style="position:absolute;left:14.9px;top:344.3px" width="9" height="9" viewBox="0 0 9 9"><path d="M2.7 4.7 L3.9 5.9 L6.3 3.3" stroke="#222" stroke-width="1.25" fill="none"/></svg>
<div style="position:absolute;left:38px;top:344px;width:9.3px;height:9px;background:#fff;border:1px solid #555;box-sizing:border-box"></div>
<svg style="position:absolute;left:38.2px;top:344.3px" width="9" height="9" viewBox="0 0 9 9"><path d="M2.7 4.7 L3.9 5.9 L6.3 3.3" stroke="#222" stroke-width="1.25" fill="none"/></svg>
<div style="position:absolute;left:57.1px;top:344.3px;width:20.7px;height:8.3px;background:#d0d0d0;border:0.8px solid #4a4a3a;border-radius:3.3px;box-sizing:border-box"></div>
<div style="position:absolute;left:14.7px;top:355px;width:9.3px;height:9px;background:#fff;border:1px solid #555;box-sizing:border-box"></div>
<svg style="position:absolute;left:14.9px;top:355.3px" width="9" height="9" viewBox="0 0 9 9"><path d="M2.7 4.7 L3.9 5.9 L6.3 3.3" stroke="#222" stroke-width="1.25" fill="none"/></svg>
<div style="position:absolute;left:38px;top:355px;width:9.3px;height:9px;background:#fff;border:1px solid #555;box-sizing:border-box"></div>
<svg style="position:absolute;left:38.2px;top:355.3px" width="9" height="9" viewBox="0 0 9 9"><path d="M2.7 4.7 L3.9 5.9 L6.3 3.3" stroke="#222" stroke-width="1.25" fill="none"/></svg>
<div style="position:absolute;left:57.1px;top:355.15px;width:20.7px;height:8.3px;background:#add8e6;border:0.8px solid #4a4a3a;border-radius:3.3px;box-sizing:border-box"></div>
<div style="position:absolute;left:14.7px;top:366px;width:9.3px;height:9px;background:#fff;border:1px solid #555;box-sizing:border-box"></div>
<svg style="position:absolute;left:14.9px;top:366.3px" width="9" height="9" viewBox="0 0 9 9"><path d="M2.7 4.7 L3.9 5.9 L6.3 3.3" stroke="#222" stroke-width="1.25" fill="none"/></svg>
<div style="position:absolute;left:38px;top:366px;width:9.3px;height:9px;background:#fff;border:1px solid #555;box-sizing:border-box"></div>
<svg style="position:absolute;left:38.2px;top:366.3px" width="9" height="9" viewBox="0 0 9 9"><path d="M2.7 4.7 L3.9 5.9 L6.3 3.3" stroke="#222" stroke-width="1.25" fill="none"/></svg>
<div style="position:absolute;left:57.1px;top:366px;width:20.7px;height:8.3px;background:#e0ffff;border:0.8px solid #4a4a3a;border-radius:3.3px;box-sizing:border-box"></div>
<div style="position:absolute;left:14.7px;top:376px;width:9.3px;height:9px;background:#fff;border:1px solid #555;box-sizing:border-box"></div>
<svg style="position:absolute;left:14.9px;top:376.3px" width="9" height="9" viewBox="0 0 9 9"><path d="M2.7 4.7 L3.9 5.9 L6.3 3.3" stroke="#222" stroke-width="1.25" fill="none"/></svg>
<div style="position:absolute;left:38px;top:376px;width:9.3px;height:9px;background:#fff;border:1px solid #555;box-sizing:border-box"></div>
<svg style="position:absolute;left:38.2px;top:376.3px" width="9" height="9" viewBox="0 0 9 9"><path d="M2.7 4.7 L3.9 5.9 L6.3 3.3" stroke="#222" stroke-width="1.25" fill="none"/></svg>
<div style="position:absolute;left:57.1px;top:376.85px;width:20.7px;height:8.3px;background:#008000;border:0.8px solid #4a4a3a;border-radius:3.3px;box-sizing:border-box"></div>
<div style="position:absolute;left:14.7px;top:387px;width:9.3px;height:9px;background:#fff;border:1px solid #555;box-sizing:border-box"></div>
<svg style="position:absolute;left:14.9px;top:387.3px" width="9" height="9" viewBox="0 0 9 9"><path d="M2.7 4.7 L3.9 5.9 L6.3 3.3" stroke="#222" stroke-width="1.25" fill="none"/></svg>
<div style="position:absolute;left:38px;top:387px;width:9.3px;height:9px;background:#fff;border:1px solid #555;box-sizing:border-box"></div>
<div style="position:absolute;left:57.1px;top:387.7px;width:20.7px;height:8.3px;background:#ff8000;border:0.8px solid #4a4a3a;border-radius:3.3px;box-sizing:border-box"></div>
<div style="position:absolute;left:14.7px;top:398px;width:9.3px;height:9px;background:#fff;border:1px solid #555;box-sizing:border-box"></div>
<svg style="position:absolute;left:14.9px;top:398.3px" width="9" height="9" viewBox="0 0 9 9"><path d="M2.7 4.7 L3.9 5.9 L6.3 3.3" stroke="#222" stroke-width="1.25" fill="none"/></svg>
<div style="position:absolute;left:38px;top:398px;width:9.3px;height:9px;background:#fff;border:1px solid #555;box-sizing:border-box"></div>
<div style="position:absolute;left:57.1px;top:398.55px;width:20.7px;height:8.3px;background:#0000ff;border:0.8px solid #4a4a3a;border-radius:3.3px;box-sizing:border-box"></div>
<div style="position:absolute;left:14.7px;top:409px;width:9.3px;height:9px;background:#fff;border:1px solid #555;box-sizing:border-box"></div>
<svg style="position:absolute;left:14.9px;top:409.3px" width="9" height="9" viewBox="0 0 9 9"><path d="M2.7 4.7 L3.9 5.9 L6.3 3.3" stroke="#222" stroke-width="1.25" fill="none"/></svg>
<div style="position:absolute;left:38px;top:409px;width:9.3px;height:9px;background:#fff;border:1px solid #555;box-sizing:border-box"></div>
<svg style="position:absolute;left:38.2px;top:409.3px" width="9" height="9" viewBox="0 0 9 9"><path d="M2.7 4.7 L3.9 5.9 L6.3 3.3" stroke="#222" stroke-width="1.25" fill="none"/></svg>
<div style="position:absolute;left:57.1px;top:409.4px;width:20.7px;height:8.3px;background:#40c0ff;border:0.8px solid #4a4a3a;border-radius:3.3px;box-sizing:border-box"></div>
<div style="position:absolute;left:14.7px;top:420px;width:9.3px;height:9px;background:#fff;border:1px solid #555;box-sizing:border-box"></div>
<svg style="position:absolute;left:14.9px;top:420.3px" width="9" height="9" viewBox="0 0 9 9"><path d="M2.7 4.7 L3.9 5.9 L6.3 3.3" stroke="#222" stroke-width="1.25" fill="none"/></svg>
<div style="position:absolute;left:38px;top:420px;width:9.3px;height:9px;background:#fff;border:1px solid #555;box-sizing:border-box"></div>
<svg style="position:absolute;left:38.2px;top:420.3px" width="9" height="9" viewBox="0 0 9 9"><path d="M2.7 4.7 L3.9 5.9 L6.3 3.3" stroke="#222" stroke-width="1.25" fill="none"/></svg>
<div style="position:absolute;left:57.1px;top:420.25px;width:20.7px;height:8.3px;background:#ff0033;border:0.8px solid #4a4a3a;border-radius:3.3px;box-sizing:border-box"></div>
<div style="position:absolute;left:14.7px;top:431px;width:9.3px;height:9px;background:#fff;border:1px solid #555;box-sizing:border-box"></div>
<svg style="position:absolute;left:14.9px;top:431.3px" width="9" height="9" viewBox="0 0 9 9"><path d="M2.7 4.7 L3.9 5.9 L6.3 3.3" stroke="#222" stroke-width="1.25" fill="none"/></svg>
<div style="position:absolute;left:38px;top:431px;width:9.3px;height:9px;background:#fff;border:1px solid #555;box-sizing:border-box"></div>
<div style="position:absolute;left:57.1px;top:431.1px;width:20.7px;height:8.3px;background:#ff0066;border:0.8px solid #4a4a3a;border-radius:3.3px;box-sizing:border-box"></div>
<div style="position:absolute;left:14.7px;top:442px;width:9.3px;height:9px;background:#fff;border:1px solid #555;box-sizing:border-box"></div>
<svg style="position:absolute;left:14.9px;top:442.3px" width="9" height="9" viewBox="0 0 9 9"><path d="M2.7 4.7 L3.9 5.9 L6.3 3.3" stroke="#222" stroke-width="1.25" fill="none"/></svg>
<div style="position:absolute;left:38px;top:442px;width:9.3px;height:9px;background:#fff;border:1px solid #555;box-sizing:border-box"></div>
<div style="position:absolute;left:57.1px;top:441.95px;width:20.7px;height:8.3px;background:#b00060;border:0.8px solid #4a4a3a;border-radius:3.3px;box-sizing:border-box"></div>
<div style="position:absolute;left:14.7px;top:452px;width:9.3px;height:9px;background:#fff;border:1px solid #555;box-sizing:border-box"></div>
<svg style="position:absolute;left:14.9px;top:452.3px" width="9" height="9" viewBox="0 0 9 9"><path d="M2.7 4.7 L3.9 5.9 L6.3 3.3" stroke="#222" stroke-width="1.25" fill="none"/></svg>
<div style="position:absolute;left:38px;top:452px;width:9.3px;height:9px;background:#fff;border:1px solid #555;box-sizing:border-box"></div>
<div style="position:absolute;left:57.1px;top:452.8px;width:20.7px;height:8.3px;background:#6000b0;border:0.8px solid #4a4a3a;border-radius:3.3px;box-sizing:border-box"></div>
<div style="position:absolute;left:14.7px;top:463px;width:9.3px;height:9px;background:#fff;border:1px solid #555;box-sizing:border-box"></div>
<svg style="position:absolute;left:14.9px;top:463.3px" width="9" height="9" viewBox="0 0 9 9"><path d="M2.7 4.7 L3.9 5.9 L6.3 3.3" stroke="#222" stroke-width="1.25" fill="none"/></svg>
<div style="position:absolute;left:38px;top:463px;width:9.3px;height:9px;background:#fff;border:1px solid #555;box-sizing:border-box"></div>
<div style="position:absolute;left:57.1px;top:463.65px;width:20.7px;height:8.3px;background:#00ff33;border:0.8px solid #4a4a3a;border-radius:3.3px;box-sizing:border-box"></div>
<div style="position:absolute;left:14.7px;top:474px;width:9.3px;height:9px;background:#fff;border:1px solid #555;box-sizing:border-box"></div>
<svg style="position:absolute;left:14.9px;top:474.3px" width="9" height="9" viewBox="0 0 9 9"><path d="M2.7 4.7 L3.9 5.9 L6.3 3.3" stroke="#222" stroke-width="1.25" fill="none"/></svg>
<div style="position:absolute;left:38px;top:474px;width:9.3px;height:9px;background:#fff;border:1px solid #555;box-sizing:border-box"></div>
<div style="position:absolute;left:57.1px;top:474.5px;width:20.7px;height:8.3px;background:#00ff66;border:0.8px solid #4a4a3a;border-radius:3.3px;box-sizing:border-box"></div>
<div style="position:absolute;left:174.5px;top:39px;width:9.5px;height:445px;background:#f0f0f0"></div>
<div style="position:absolute;left:174.5px;top:50px;width:9.5px;height:161.5px;background:#cdcdcd"></div>
<svg style="position:absolute;left:176px;top:41.5px" width="7" height="5" viewBox="0 0 7 5"><path d="M1 4 L3.5 1.4 L6 4" stroke="#4c4c4c" stroke-width="1.45" fill="none"/></svg>
<svg style="position:absolute;left:176px;top:475.5px" width="7" height="5" viewBox="0 0 7 5"><path d="M1 1 L3.5 3.6 L6 1" stroke="#4c4c4c" stroke-width="1.45" fill="none"/></svg>
<div style="position:absolute;left:2px;top:483.7px;width:172.5px;height:10.1px;background:#f0f0f0"></div>
<div style="position:absolute;left:12.7px;top:483.7px;width:93px;height:10.1px;background:#cdcdcd"></div>
<svg style="position:absolute;left:5px;top:485.3px" width="5" height="7" viewBox="0 0 5 7"><path d="M4 1 L1.4 3.5 L4 6" stroke="#4c4c4c" stroke-width="1.45" fill="none"/></svg>
<svg style="position:absolute;left:166px;top:485.3px" width="5" height="7" viewBox="0 0 5 7"><path d="M1 1 L3.6 3.5 L1 6" stroke="#4c4c4c" stroke-width="1.45" fill="none"/></svg>
<div style="position:absolute;left:174.5px;top:483.7px;width:9.5px;height:10.1px;background:#f0f0f0"></div>
<div style="position:absolute;left:184.6px;top:40px;width:2.6px;height:454px;background:#f7f7f7"></div>
<div style="position:absolute;left:188.2px;top:38px;width:660.2px;height:330.2px;background:#c0c0c0"></div>
<div style="position:absolute;left:188.2px;top:38px;width:660.2px;height:1px;background:#6e6e6e"></div>
<div style="position:absolute;left:188.2px;top:38px;width:1px;height:330.2px;background:#6e6e6e"></div>
<div style="position:absolute;left:209.7px;top:59.6px;width:640.3px;height:309.4px;background:#f0f0f0"></div>
<div style="position:absolute;left:209.7px;top:59.6px;width:637.9px;height:307.4px;background:#ffffff"></div>
<div style="position:absolute;left:188.2px;top:367.4px;width:21.5px;height:0.9px;background:#555"></div>
<div style="position:absolute;left:847.6px;top:38px;width:0.9px;height:21.6px;background:#555"></div>
<svg style="position:absolute;left:0;top:0" width="850" height="510" viewBox="0 0 850 510"><path d="M210.50 59.60v-2.20M214.50 59.60v-4.20M219.50 59.60v-2.20M224.50 59.60v-2.20M229.50 59.60v-2.20M234.50 59.60v-2.20M239.50 59.60v-6.40M243.50 59.60v-2.20M248.50 59.60v-2.20M253.50 59.60v-2.20M258.50 59.60v-2.20M263.50 59.60v-4.20M267.50 59.60v-2.20M272.50 59.60v-2.20M277.50 59.60v-2.20M282.50 59.60v-2.20M287.50 59.60v-6.40M292.50 59.60v-2.20M296.50 59.60v-2.20M301.50 59.60v-2.20M306.50 59.60v-2.20M311.50 59.60v-4.20M316.50 59.60v-2.20M320.50 59.60v-2.20M325.50 59.60v-2.20M330.50 59.60v-2.20M335.50 59.60v-6.40M340.50 59.60v-2.20M345.50 59.60v-2.20M349.50 59.60v-2.20M354.50 59.60v-2.20M359.50 59.60v-4.20M364.50 59.60v-2.20M369.50 59.60v-2.20M373.50 59.60v-2.20M378.50 59.60v-2.20M383.50 59.60v-6.40M388.50 59.60v-2.20M393.50 59.60v-2.20M398.50 59.60v-2.20M402.50 59.60v-2.20M407.50 59.60v-4.20M412.50 59.60v-2.20M417.50 59.60v-2.20M422.50 59.60v-2.20M426.50 59.60v-2.20M431.50 59.60v-6.40M436.50 59.60v-2.20M441.50 59.60v-2.20M446.50 59.60v-2.20M451.50 59.60v-2.20M455.50 59.60v-4.20M460.50 59.60v-2.20M465.50 59.60v-2.20M470.50 59.60v-2.20M475.50 59.60v-2.20M480.50 59.60v-6.40M484.50 59.60v-2.20M489.50 59.60v-2.20M494.50 59.60v-2.20M499.50 59.60v-2.20M504.50 59.60v-4.20M508.50 59.60v-2.20M513.50 59.60v-2.20M518.50 59.60v-2.20M523.50 59.60v-2.20M528.50 59.60v-6.40M533.50 59.60v-2.20M537.50 59.60v-2.20M542.50 59.60v-2.20M547.50 59.60v-2.20M552.50 59.60v-4.20M557.50 59.60v-2.20M561.50 59.60v-2.20M566.50 59.60v-2.20M571.50 59.60v-2.20M576.50 59.60v-6.40M581.50 59.60v-2.20M586.50 59.60v-2.20M590.50 59.60v-2.20M595.50 59.60v-2.20M600.50 59.60v-4.20M605.50 59.60v-2.20M610.50 59.60v-2.20M614.50 59.60v-2.20M619.50 59.60v-2.20M624.50 59.60v-6.40M629.50 59.60v-2.20M634.50 59.60v-2.20M639.50 59.60v-2.20M643.50 59.60v-2.20M648.50 59.60v-4.20M653.50 59.60v-2.20M658.50 59.60v-2.20M663.50 59.60v-2.20M667.50 59.60v-2.20M672.50 59.60v-6.40M677.50 59.60v-2.20M682.50 59.60v-2.20M687.50 59.60v-2.20M692.50 59.60v-2.20M696.50 59.60v-4.20M701.50 59.60v-2.20M706.50 59.60v-2.20M711.50 59.60v-2.20M716.50 59.60v-2.20M721.50 59.60v-6.40M725.50 59.60v-2.20M730.50 59.60v-2.20M735.50 59.60v-2.20M740.50 59.60v-2.20M745.50 59.60v-4.20M749.50 59.60v-2.20M754.50 59.60v-2.20M759.50 59.60v-2.20M764.50 59.60v-2.20M769.50 59.60v-6.40M774.50 59.60v-2.20M778.50 59.60v-2.20M783.50 59.60v-2.20M788.50 59.60v-2.20M793.50 59.60v-4.20M798.50 59.60v-2.20M802.50 59.60v-2.20M807.50 59.60v-2.20M812.50 59.60v-2.20M817.50 59.60v-6.40M822.50 59.60v-2.20M827.50 59.60v-2.20M831.50 59.60v-2.20M836.50 59.60v-2.20M841.50 59.60v-4.20M846.50 59.60v-2.20M209.70 362.50h-3.90M209.70 357.50h-3.90M209.70 352.50h-3.90M209.70 347.50h-3.90M209.70 343.50h-6.50M209.70 338.50h-3.90M209.70 333.50h-3.90M209.70 328.50h-3.90M209.70 323.50h-3.90M209.70 318.50h-6.50M209.70 314.50h-3.90M209.70 309.50h-3.90M209.70 304.50h-3.90M209.70 299.50h-3.90M209.70 294.50h-6.50M209.70 290.50h-3.90M209.70 285.50h-3.90M209.70 280.50h-3.90M209.70 275.50h-3.90M209.70 270.50h-6.50M209.70 265.50h-3.90M209.70 261.50h-3.90M209.70 256.50h-3.90M209.70 251.50h-3.90M209.70 246.50h-6.50M209.70 241.50h-3.90M209.70 237.50h-3.90M209.70 232.50h-3.90M209.70 227.50h-3.90M209.70 222.50h-6.50M209.70 217.50h-3.90M209.70 212.50h-3.90M209.70 208.50h-3.90M209.70 203.50h-3.90M209.70 198.50h-6.50M209.70 193.50h-3.90M209.70 188.50h-3.90M209.70 183.50h-3.90M209.70 179.50h-3.90M209.70 174.50h-6.50M209.70 169.50h-3.90M209.70 164.50h-3.90M209.70 159.50h-3.90M209.70 155.50h-3.90M209.70 150.50h-6.50M209.70 145.50h-3.90M209.70 140.50h-3.90M209.70 135.50h-3.90M209.70 130.50h-3.90M209.70 126.50h-6.50M209.70 121.50h-3.90M209.70 116.50h-3.90M209.70 111.50h-3.90M209.70 106.50h-3.90M209.70 102.50h-6.50M209.70 97.50h-3.90M209.70 92.50h-3.90M209.70 87.50h-3.90M209.70 82.50h-3.90M209.70 77.50h-6.50M209.70 73.50h-3.90M209.70 68.50h-3.90M209.70 63.50h-3.90" stroke="#404040" stroke-width="0.95" fill="none"/><path d="M209.30 59.20H848 M209.30 59.20V367" stroke="#6a6a6a" stroke-width="0.8" fill="none"/></svg>
<svg style="position:absolute;left:0;top:0" width="850" height="510" viewBox="0 0 850 510"><rect x="238.7" y="233.5" width="205.7" height="27.2" fill="none" stroke="#dcb48c" stroke-width="0.9"/><rect x="613.6" y="233.5" width="205.7" height="27.2" fill="none" stroke="#dcb48c" stroke-width="0.9"/><rect x="238.70" y="246.30" width="18.90" height="1.20" fill="#fa0032" opacity="1"/><rect x="257.20" y="245.65" width="37.20" height="2.50" fill="#fa0032" opacity="1"/><rect x="293.60" y="244.90" width="19.40" height="4.00" fill="#fa0032" opacity="1"/><rect x="371.00" y="241.35" width="19.50" height="4.20" fill="#fa0032" opacity="1"/><rect x="389.50" y="241.95" width="37.50" height="3.00" fill="#fa0032" opacity="1"/><rect x="371.00" y="248.30" width="19.50" height="4.20" fill="#fa0032" opacity="1"/><rect x="389.50" y="248.90" width="37.50" height="3.00" fill="#fa0032" opacity="1"/><rect x="311.70" y="237.2" width="60.70" height="19.1" fill="#fa0032"/><rect x="800.40" y="246.30" width="18.90" height="1.20" fill="#fa0032" opacity="1"/><rect x="763.60" y="245.65" width="37.20" height="2.50" fill="#fa0032" opacity="1"/><rect x="745.00" y="244.90" width="19.40" height="4.00" fill="#fa0032" opacity="1"/><rect x="667.50" y="241.35" width="19.50" height="4.20" fill="#fa0032" opacity="1"/><rect x="631.00" y="241.95" width="37.50" height="3.00" fill="#fa0032" opacity="1"/><rect x="667.50" y="248.30" width="19.50" height="4.20" fill="#fa0032" opacity="1"/><rect x="631.00" y="248.90" width="37.50" height="3.00" fill="#fa0032" opacity="1"/><rect x="685.60" y="237.2" width="60.70" height="19.1" fill="#fa0032"/><path d="M426 250.4 H632" stroke="#fa0032" stroke-width="1.6"/><path d="M426 243.45 H450.00 C480.00 243.45 491.30 167.90 521.30 167.90 H536.70 C566.70 167.90 578.00 243.45 608.00 243.45 H632.00" stroke="#fa0032" stroke-width="1.6" fill="none"/><text x="243.1" y="240.6" font-family="Liberation Sans" font-size="7.6" fill="#d2a650" stroke="#d2a650" stroke-width="0.15" textLength="22.4" lengthAdjust="spacingAndGlyphs">MMI1x2</text><g transform="translate(1058 0) scale(-1 1)"><text x="243.1" y="240.6" font-family="Liberation Sans" font-size="7.6" fill="#d2a650" stroke="#d2a650" stroke-width="0.15" textLength="22.4" lengthAdjust="spacingAndGlyphs">MMI1x2</text></g></svg>
<div style="position:absolute;left:189.4px;top:371.2px;width:110.2px;height:12.8px;background:#f3f3f3"></div>
<div style="position:absolute;left:189.4px;top:371.2px;width:110px;height:0.9px;background:#ffffff"></div>
<div style="position:absolute;left:189.4px;top:371.2px;width:0.9px;height:12.8px;background:#ffffff"></div>
<div style="position:absolute;left:299.2px;top:371.4px;width:0.9px;height:12.4px;background:#5a5a5a"></div>
<svg style="position:absolute;left:193.3px;top:372.3px" width="7" height="7.4" viewBox="0 0 8 8" preserveAspectRatio="none"><rect x="0.3" y="0.3" width="7.4" height="7.4" fill="#e8a317" stroke="#8a5a00" stroke-width="0.6"/><path d="M2 6V2.2L4 4.4L6 2.2V6" stroke="#5a3a00" stroke-width="1" fill="none"/></svg>
<div style="position:absolute;left:189.2px;top:383px;width:659.4px;height:112px;background:#f9f9f9"></div>
<div style="position:absolute;left:189.2px;top:494.1px;width:660.8px;height:1.1px;background:#808080"></div>
<div style="position:absolute;left:848.3px;top:382.8px;width:1.7px;height:112.4px;background:#8c8c8c"></div>
<div style="position:absolute;left:300px;top:383.2px;width:548.6px;height:0.9px;background:#f0f0f0"></div>
<div style="position:absolute;left:191.2px;top:384.1px;width:654.6px;height:107.1px;background:#ffffff"></div>
<div style="position:absolute;left:191.2px;top:384.1px;width:654.6px;height:1.6px;background:#858585"></div>
<div style="position:absolute;left:191px;top:384.1px;width:1.4px;height:107.1px;background:#6c6c6c"></div>
<div style="position:absolute;left:214.3px;top:385.7px;width:9.9px;height:105.5px;background:#f5f5f5"></div>
<div style="position:absolute;left:835.2px;top:385.7px;width:10.6px;height:105.5px;background:#f0f0f0"></div>
<div style="position:absolute;left:835.2px;top:396.5px;width:9.6px;height:10.2px;background:#cdcdcd"></div>
<svg style="position:absolute;left:836.6px;top:389px" width="7" height="5" viewBox="0 0 7 5"><path d="M1 4 L3.5 1.4 L6 4" stroke="#4c4c4c" stroke-width="1.45" fill="none"/></svg>
<svg style="position:absolute;left:836.6px;top:483.8px" width="7" height="5" viewBox="0 0 7 5"><path d="M1 1 L3.5 3.6 L6 1" stroke="#4c4c4c" stroke-width="1.45" fill="none"/></svg>
<div style="position:absolute;left:198px;top:386px;width:14.3px;height:10px;text-align:right;font:6.9px/10px 'Liberation Mono', monospace;color:#333;-webkit-text-stroke:0.2px">1</div>
<div style="position:absolute;left:225.3px;top:386px;height:10px;white-space:pre;font:bold 7.48px/10px 'Liberation Mono', monospace"><span style="color:#45ad45;font-style:italic">// ------------------------------------------</span></div>
<div style="position:absolute;left:198px;top:395px;width:14.3px;height:10px;text-align:right;font:6.9px/10px 'Liberation Mono', monospace;color:#333;-webkit-text-stroke:0.2px">2</div>
<div style="position:absolute;left:225.3px;top:395px;height:10px;white-space:pre;font:bold 7.48px/10px 'Liberation Mono', monospace"><span style="color:#45ad45;font-style:italic">// REFRESH</span></div>
<div style="position:absolute;left:198px;top:405px;width:14.3px;height:10px;text-align:right;font:6.9px/10px 'Liberation Mono', monospace;color:#333;-webkit-text-stroke:0.2px">3</div>
<div style="position:absolute;left:225.3px;top:405px;height:10px;white-space:pre;font:bold 7.48px/10px 'Liberation Mono', monospace"><span style="color:#262626;font-weight:bold">dsp</span><span style="color:#9a9a9a">::</span><span style="color:#e044e0">clearInfoWin</span><span style="color:#262626">(); </span><span style="color:#262626;font-weight:bold">mask</span><span style="color:#9a9a9a">::</span><span style="color:#e044e0">clearFiles</span><span style="color:#262626">(); </span><span style="color:#262626;font-weight:bold">mask</span><span style="color:#9a9a9a">::</span><span style="color:#e044e0">clearTV</span><span style="color:#262626">(); </span><span style="color:#262626;font-weight:bold">res</span><span style="color:#9a9a9a">::</span><span style="color:#e044e0">Clear</span><span style="color:#262626">();</span></div>
<div style="position:absolute;left:198px;top:414px;width:14.3px;height:10px;text-align:right;font:6.9px/10px 'Liberation Mono', monospace;color:#333;-webkit-text-stroke:0.2px">4</div>
<div style="position:absolute;left:198px;top:423px;width:14.3px;height:10px;text-align:right;font:6.9px/10px 'Liberation Mono', monospace;color:#333;-webkit-text-stroke:0.2px">5</div>
<div style="position:absolute;left:198px;top:433px;width:14.3px;height:10px;text-align:right;font:6.9px/10px 'Liberation Mono', monospace;color:#333;-webkit-text-stroke:0.2px">6</div>
<div style="position:absolute;left:225.3px;top:433px;height:10px;white-space:pre;font:bold 7.48px/10px 'Liberation Mono', monospace"><span style="color:#45ad45;font-style:italic">// ------------------------------------------</span></div>
<div style="position:absolute;left:198px;top:442px;width:14.3px;height:10px;text-align:right;font:6.9px/10px 'Liberation Mono', monospace;color:#333;-webkit-text-stroke:0.2px">7</div>
<div style="position:absolute;left:225.3px;top:442px;height:10px;white-space:pre;font:bold 7.48px/10px 'Liberation Mono', monospace"><span style="color:#45ad45;font-style:italic">// LOAD THE FOUNDRIES, PACKAGINGS AND DESIGN HOUSES.</span></div>
<div style="position:absolute;left:198px;top:452px;width:14.3px;height:10px;text-align:right;font:6.9px/10px 'Liberation Mono', monospace;color:#333;-webkit-text-stroke:0.2px">8</div>
<div style="position:absolute;left:225.3px;top:452px;height:10px;white-space:pre;font:bold 7.48px/10px 'Liberation Mono', monospace"><span style="color:#3434f4;font-weight:bold">pda</span><span style="color:#9a9a9a">::</span><span style="color:#e044e0">loadFoundry</span><span style="color:#262626">(</span><span style="color:#b05e5e">"foundryDemoFab"</span><span style="color:#262626">);</span></div>
<div style="position:absolute;left:198px;top:461px;width:14.3px;height:10px;text-align:right;font:6.9px/10px 'Liberation Mono', monospace;color:#333;-webkit-text-stroke:0.2px">9</div>
<div style="position:absolute;left:225.3px;top:461px;height:10px;white-space:pre;font:bold 7.48px/10px 'Liberation Mono', monospace"><span style="color:#3434f4;font-weight:bold">pda</span><span style="color:#9a9a9a">::</span><span style="color:#e044e0">enableFoundry</span><span style="color:#262626">(</span><span style="color:#b05e5e">"DEMOFAB, DEMOFAB.SOI"</span><span style="color:#262626">);</span></div>
<div style="position:absolute;left:198px;top:471px;width:14.3px;height:10px;text-align:right;font:6.9px/10px 'Liberation Mono', monospace;color:#333;-webkit-text-stroke:0.2px">10</div>
<div style="position:absolute;left:198px;top:480px;width:14.3px;height:10px;text-align:right;font:6.9px/10px 'Liberation Mono', monospace;color:#333;-webkit-text-stroke:0.2px">11</div>
<div style="position:absolute;left:0px;top:495.2px;width:850px;height:14.8px;background:#f0f0f0"></div>
<div style="position:absolute;left:189px;top:495.2px;width:661px;height:3px;background:linear-gradient(#c0c0c0,#f0f0f0)"></div>
<div style="position:absolute;left:0px;top:494.4px;width:188.6px;height:1.2px;background:#fbfbfb"></div>
<div style="position:absolute;left:0px;top:496.2px;width:188.6px;height:0.8px;background:#dedede"></div>
<div style="position:absolute;left:521.2px;top:496.6px;width:0.8px;height:12px;background:#d6d6d6"></div>
<div style="position:absolute;left:522px;top:496.6px;width:0.9px;height:12px;background:#ffffff"></div>
<div style="position:absolute;left:696.6px;top:496.6px;width:0.8px;height:12px;background:#d6d6d6"></div>
<div style="position:absolute;left:697.4px;top:496.6px;width:0.9px;height:12px;background:#ffffff"></div>
<svg style="position:absolute;left:840px;top:500px" width="10" height="10" viewBox="0 0 10 10"><path d="M9 1L1 9M9 4L4 9M9 7L7 9" stroke="#b8b8b8" stroke-width="0.8"/></svg>
<span class="t" style="font-size:8.5px;color:#1a1a1a;left:5.7px;top:2px;transform-origin:0 50%;transform:scaleX(0.825);">File</span>
<span class="t" style="font-size:8.5px;color:#1a1a1a;left:26.1px;top:2px;transform-origin:0 50%;transform:scaleX(0.832);">Edit</span>
<span class="t" style="font-size:8.5px;color:#1a1a1a;left:47.8px;top:2px;transform-origin:0 50%;transform:scaleX(0.784);">PDK</span>
<span class="t" style="font-size:8.5px;color:#1a1a1a;left:70.9px;top:2px;transform-origin:0 50%;transform:scaleX(0.807);">Process</span>
<span class="t" style="font-size:8.5px;color:#1a1a1a;left:105.7px;top:2px;transform-origin:0 50%;transform:scaleX(0.918);">Topview</span>
<span class="t" style="font-size:8.5px;color:#1a1a1a;left:143.1px;top:2px;transform-origin:0 50%;transform:scaleX(0.815);">Results</span>
<span class="t" style="font-size:8.5px;color:#1a1a1a;left:175.7px;top:2px;transform-origin:0 50%;transform:scaleX(0.892);">Tools</span>
<span class="t" style="font-size:8.5px;color:#1a1a1a;left:203.2px;top:2px;transform-origin:0 50%;transform:scaleX(0.860);">Editor</span>
<span class="t" style="font-size:8.5px;color:#1a1a1a;left:231.8px;top:2px;transform-origin:0 50%;transform:scaleX(0.844);">Viewer</span>
<span class="t" style="font-size:8.5px;color:#1a1a1a;left:263.1px;top:2px;transform-origin:0 50%;transform:scaleX(0.898);">Options</span>
<span class="t" style="font-size:8.5px;color:#1a1a1a;left:298.6px;top:2px;transform-origin:0 50%;transform:scaleX(0.923);">Window</span>
<span class="t" style="font-size:8.5px;color:#1a1a1a;left:335.7px;top:2px;transform-origin:0 50%;transform:scaleX(0.904);">Help</span>
<span class="t" style="font-size:7.7px;color:#1a1a1a;left:4.4px;top:26.5px;transform-origin:0 50%;transform:scaleX(0.877);">New</span>
<span class="t" style="font-size:7.7px;color:#1a1a1a;left:23.6px;top:26.5px;transform-origin:0 50%;transform:scaleX(0.882);">Open</span>
<span class="t" style="font-size:7.7px;color:#1a1a1a;left:45.3px;top:26.5px;transform-origin:0 50%;transform:scaleX(0.867);">Save</span>
<span class="t" style="font-size:7.7px;color:#1a1a1a;left:65.6px;top:26.5px;transform-origin:0 50%;transform:scaleX(0.892);">Material</span>
<span class="t" style="font-size:7.7px;color:#1a1a1a;left:95.1px;top:26.5px;transform-origin:0 50%;transform:scaleX(0.897);">Etchant</span>
<span class="t" style="font-size:7.7px;color:#1a1a1a;left:123.4px;top:26.5px;transform-origin:0 50%;transform:scaleX(0.847);">Element</span>
<span class="t" style="font-size:7.7px;color:#1a1a1a;left:152.1px;top:26.5px;transform-origin:0 50%;transform:scaleX(0.847);">Simulation</span>
<span class="t" style="font-size:7.7px;color:#1a1a1a;left:195.4px;top:26.5px;transform-origin:0 50%;transform:scaleX(0.844);">Flow</span>
<span class="t" style="font-size:7.7px;color:#1a1a1a;left:229.5px;top:26.5px;transform-origin:0 50%;transform:scaleX(0.854);">Mask</span>
<span class="t" style="font-size:7.7px;color:#1a1a1a;left:261.5px;top:26.5px;transform-origin:0 50%;transform:scaleX(0.846);">Names</span>
<span class="t" style="font-size:7.7px;color:#1a1a1a;left:296px;top:26.5px;transform-origin:0 50%;transform:scaleX(0.890);">Optics</span>
<span class="t" style="font-size:7.7px;color:#1a1a1a;left:334.9px;top:26.5px;transform-origin:0 50%;transform:scaleX(0.846);">DC</span>
<span class="t" style="font-size:7.7px;color:#1a1a1a;left:369.2px;top:26.5px;transform-origin:0 50%;transform:scaleX(0.810);">RF</span>
<span class="t" style="font-size:7.7px;color:#1a1a1a;left:392.3px;top:26.5px;transform-origin:0 50%;transform:scaleX(0.893);">Boundary</span>
<span class="t" style="font-size:7.7px;color:#1a1a1a;left:426.4px;top:26.5px;transform-origin:0 50%;transform:scaleX(0.815);">Kamus</span>
<span class="t" style="font-size:7.7px;color:#1a1a1a;left:452.5px;top:26.5px;transform-origin:0 50%;transform:scaleX(0.830);">Check</span>
<span class="t" style="font-size:7.7px;color:#1a1a1a;left:477.4px;top:26.5px;transform-origin:0 50%;transform:scaleX(0.883);">Update</span>
<span class="t" style="font-size:7.7px;color:#1a1a1a;left:508px;top:26.5px;transform-origin:0 50%;transform:scaleX(0.954);">Start</span>
<span class="t" style="font-size:7.7px;color:#1a1a1a;left:580.7px;top:26.5px;transform-origin:0 50%;transform:scaleX(0.819);">Load PDK</span>
<span class="t" style="font-size:7.7px;color:#1a1a1a;left:616.4px;top:26.5px;transform-origin:0 50%;transform:scaleX(0.831);">Enable PDK</span>
<span class="t" style="font-size:7.7px;color:#1a1a1a;left:655.4px;top:26.5px;transform-origin:0 50%;transform:scaleX(0.864);">Export PDK</span>
<span class="t" style="font-size:7.7px;color:#1a1a1a;left:705.3px;top:26.5px;transform-origin:0 50%;transform:scaleX(0.822);">Chip</span>
<span class="t" style="font-size:7.7px;color:#1a1a1a;left:746.3px;top:26.5px;transform-origin:0 50%;transform:scaleX(0.779);">BB</span>
<span class="t" style="font-size:7.7px;color:#1a1a1a;left:783.3px;top:26.5px;transform-origin:0 50%;transform:scaleX(0.766);">MCS</span>
<span class="t" style="font-size:7.7px;color:#1a1a1a;left:821.9px;top:26.5px;transform-origin:0 50%;transform:scaleX(0.805);">DRC</span>
<span class="t" style="font-size:7.7px;color:#1a1a1a;left:531.8px;top:21.5px;transform-origin:0 50%;transform:scaleX(0.900);">Topview</span>
<span class="t" style="font-size:7.7px;color:#111;left:15.2px;top:39.5px;transform-origin:0 50%;transform:scaleX(0.858);">Show</span>
<span class="t" style="font-size:7.7px;color:#111;left:39px;top:39.5px;transform-origin:0 50%;transform:scaleX(0.722);">Fill</span>
<span class="t" style="font-size:7.7px;color:#111;left:56.2px;top:39.5px;transform-origin:0 50%;transform:scaleX(0.843);">Colour</span>
<span class="t" style="font-size:7.7px;color:#111;left:83.2px;top:39.5px;transform-origin:0 50%;transform:scaleX(0.819);">Name</span>
<span class="t" style="font-size:7.7px;color:#111;left:3.6px;top:50.5px;transform-origin:0 50%;transform:scaleX(0.917);">- Materials</span>
<span class="t" style="font-size:7.7px;color:#111;left:84.2px;top:62.5px;transform-origin:0 50%;transform:scaleX(0.893);">demofabmatEffBackground</span>
<span class="t" style="font-size:7.7px;color:#111;left:84.2px;top:73.5px;transform-origin:0 50%;transform:scaleX(0.904);">demofabmatEffWaveguide</span>
<span class="t" style="font-size:7.7px;color:#111;left:84.2px;top:83.5px;transform-origin:0 50%;transform:scaleX(0.868);">demofabSiO2</span>
<span class="t" style="font-size:7.7px;color:#111;left:84.2px;top:94.5px;transform-origin:0 50%;transform:scaleX(0.873);">demofabSi</span>
<span class="t" style="font-size:7.7px;color:#111;left:3.6px;top:104.5px;transform-origin:0 50%;transform:scaleX(0.860);">- Cross Section</span>
<span class="t" style="font-size:7.7px;color:#111;left:84.2px;top:116.5px;transform-origin:0 50%;transform:scaleX(0.810);">mcsBB_OUTLINE</span>
<span class="t" style="font-size:7.7px;color:#111;left:84.2px;top:127.5px;transform-origin:0 50%;transform:scaleX(0.821);">mcsBB_OUTLINEwg</span>
<span class="t" style="font-size:7.7px;color:#111;left:84.2px;top:138.5px;transform-origin:0 50%;transform:scaleX(0.818);">mcsBB_OUTLINEdc</span>
<span class="t" style="font-size:7.7px;color:#111;left:84.2px;top:148.5px;transform-origin:0 50%;transform:scaleX(0.842);">mcsBB_OUTLINErf</span>
<span class="t" style="font-size:7.7px;color:#111;left:84.2px;top:159.5px;transform-origin:0 50%;transform:scaleX(0.814);">mcsBB_PARAM</span>
<span class="t" style="font-size:7.7px;color:#111;left:84.2px;top:170.5px;transform-origin:0 50%;transform:scaleX(0.795);">mcsBB_GUIDES</span>
<span class="t" style="font-size:7.7px;color:#111;left:84.2px;top:181.5px;transform-origin:0 50%;transform:scaleX(0.818);">mcsBB_DOCUVIEW</span>
<span class="t" style="font-size:7.7px;color:#111;left:84.2px;top:192.5px;transform-origin:0 50%;transform:scaleX(0.813);">mcsDiceline</span>
<span class="t" style="font-size:7.7px;color:#111;left:84.2px;top:203.5px;transform-origin:0 50%;transform:scaleX(0.832);">mcsSacrificial</span>
<span class="t" style="font-size:7.7px;color:#111;left:84.2px;top:214.5px;transform-origin:0 50%;transform:scaleX(0.826);">mcsPCM_align</span>
<span class="t" style="font-size:7.7px;color:#111;left:84.2px;top:224.5px;transform-origin:0 50%;transform:scaleX(0.820);">mcsBB_OUTLINE_CARRIER</span>
<span class="t" style="font-size:7.7px;color:#111;left:84.2px;top:235.5px;transform-origin:0 50%;transform:scaleX(0.813);">mcsBB_OUTLINE_PACKAGE</span>
<span class="t" style="font-size:7.7px;color:#111;left:84.2px;top:246.5px;transform-origin:0 50%;transform:scaleX(0.858);">mcsPackageBoundary</span>
<span class="t" style="font-size:7.7px;color:#111;left:84.2px;top:257.5px;transform-origin:0 50%;transform:scaleX(0.846);">mcsPackageMarker</span>
<span class="t" style="font-size:7.7px;color:#111;left:84.2px;top:268.5px;transform-origin:0 50%;transform:scaleX(0.833);">mcsDie_Demo</span>
<span class="t" style="font-size:7.7px;color:#111;left:84.2px;top:279.5px;transform-origin:0 50%;transform:scaleX(0.808);">mcsBB_RF</span>
<span class="t" style="font-size:7.7px;color:#111;left:84.2px;top:290.5px;transform-origin:0 50%;transform:scaleX(0.803);">mcsBB_DC</span>
<span class="t" style="font-size:7.7px;color:#111;left:84.2px;top:300.5px;transform-origin:0 50%;transform:scaleX(0.799);">mcsBB_MOCKUP_GUIDES</span>
<span class="t" style="font-size:7.7px;color:#111;left:84.2px;top:311.5px;transform-origin:0 50%;transform:scaleX(0.819);">mcsDC_DEMOFAB</span>
<span class="t" style="font-size:7.7px;color:#111;left:84.2px;top:322.5px;transform-origin:0 50%;transform:scaleX(0.819);">mcsRF_DEMOFAB</span>
<span class="t" style="font-size:7.7px;color:#111;left:84.2px;top:333.5px;transform-origin:0 50%;transform:scaleX(0.811);">mcsTEXT_DEMOFAB</span>
<span class="t" style="font-size:7.7px;color:#111;left:84.2px;top:344.5px;transform-origin:0 50%;transform:scaleX(0.847);">mcsPackageFibre</span>
<span class="t" style="font-size:7.7px;color:#111;left:84.2px;top:355.5px;transform-origin:0 50%;transform:scaleX(0.834);">mcsPackageDC</span>
<span class="t" style="font-size:7.7px;color:#111;left:84.2px;top:366.5px;transform-origin:0 50%;transform:scaleX(0.829);">mcsPackageRF</span>
<span class="t" style="font-size:7.7px;color:#111;left:84.2px;top:376.5px;transform-origin:0 50%;transform:scaleX(0.876);">mcsPackageText</span>
<span class="t" style="font-size:7.7px;color:#111;left:84.2px;top:387.5px;transform-origin:0 50%;transform:scaleX(0.856);">mcsSOI_Mod1</span>
<span class="t" style="font-size:7.7px;color:#111;left:84.2px;top:398.5px;transform-origin:0 50%;transform:scaleX(0.862);">mcsMod1_Metal</span>
<span class="t" style="font-size:7.7px;color:#111;left:84.2px;top:409.5px;transform-origin:0 50%;transform:scaleX(0.842);">mcsMod1_Via</span>
<span class="t" style="font-size:7.7px;color:#111;left:84.2px;top:420.5px;transform-origin:0 50%;transform:scaleX(0.813);">mcsSOI_DEEP</span>
<span class="t" style="font-size:7.7px;color:#111;left:84.2px;top:431.5px;transform-origin:0 50%;transform:scaleX(0.809);">mcsSOI_DEEP_CORE</span>
<span class="t" style="font-size:7.7px;color:#111;left:84.2px;top:441.5px;transform-origin:0 50%;transform:scaleX(0.813);">mcsSOI_DEEP_CLAD</span>
<span class="t" style="font-size:7.7px;color:#111;left:84.2px;top:452.5px;transform-origin:0 50%;transform:scaleX(0.810);">mcsSOI_DEEP_TRENCH</span>
<span class="t" style="font-size:7.7px;color:#111;left:84.2px;top:463.5px;transform-origin:0 50%;transform:scaleX(0.824);">mcsSOI_SHALLOW</span>
<span class="t" style="font-size:7.7px;color:#111;left:84.2px;top:474.5px;transform-origin:0 50%;transform:scaleX(0.821);">mcsSOI_SHALLOW_CORE</span>
<span class="t" style="font-size:7.7px;color:#1a1a1a;left:219px;top:41.5px;width:40px;text-align:center;transform:scaleX(0.820);">0um</span>
<span class="t" style="font-size:7.7px;color:#1a1a1a;left:267.2px;top:41.5px;width:40px;text-align:center;transform:scaleX(0.820);">20</span>
<span class="t" style="font-size:7.7px;color:#1a1a1a;left:315.4px;top:41.5px;width:40px;text-align:center;transform:scaleX(0.820);">40</span>
<span class="t" style="font-size:7.7px;color:#1a1a1a;left:363.6px;top:41.5px;width:40px;text-align:center;transform:scaleX(0.820);">60</span>
<span class="t" style="font-size:7.7px;color:#1a1a1a;left:411.8px;top:41.5px;width:40px;text-align:center;transform:scaleX(0.820);">80</span>
<span class="t" style="font-size:7.7px;color:#1a1a1a;left:460px;top:41.5px;width:40px;text-align:center;transform:scaleX(0.820);">100</span>
<span class="t" style="font-size:7.7px;color:#1a1a1a;left:508.2px;top:41.5px;width:40px;text-align:center;transform:scaleX(0.820);">120</span>
<span class="t" style="font-size:7.7px;color:#1a1a1a;left:556.4px;top:41.5px;width:40px;text-align:center;transform:scaleX(0.820);">140</span>
<span class="t" style="font-size:7.7px;color:#1a1a1a;left:604.6px;top:41.5px;width:40px;text-align:center;transform:scaleX(0.820);">160</span>
<span class="t" style="font-size:7.7px;color:#1a1a1a;left:652.8px;top:41.5px;width:40px;text-align:center;transform:scaleX(0.820);">180</span>
<span class="t" style="font-size:7.7px;color:#1a1a1a;left:701px;top:41.5px;width:40px;text-align:center;transform:scaleX(0.820);">200</span>
<span class="t" style="font-size:7.7px;color:#1a1a1a;left:749.2px;top:41.5px;width:40px;text-align:center;transform:scaleX(0.820);">220</span>
<span class="t" style="font-size:7.7px;color:#1a1a1a;left:797.4px;top:41.5px;width:40px;text-align:center;transform:scaleX(0.820);">240um</span>
<span class="t" style="font-size:7.7px;color:#1a1a1a;left:176.4px;top:72.95px;width:40px;text-align:center;transform:rotate(-90deg) scaleX(0.820);">70um</span>
<span class="t" style="font-size:7.7px;color:#1a1a1a;left:176.4px;top:97.05px;width:40px;text-align:center;transform:rotate(-90deg) scaleX(0.820);">60</span>
<span class="t" style="font-size:7.7px;color:#1a1a1a;left:176.4px;top:121.15px;width:40px;text-align:center;transform:rotate(-90deg) scaleX(0.820);">50</span>
<span class="t" style="font-size:7.7px;color:#1a1a1a;left:176.4px;top:145.25px;width:40px;text-align:center;transform:rotate(-90deg) scaleX(0.820);">40</span>
<span class="t" style="font-size:7.7px;color:#1a1a1a;left:176.4px;top:169.35px;width:40px;text-align:center;transform:rotate(-90deg) scaleX(0.820);">30</span>
<span class="t" style="font-size:7.7px;color:#1a1a1a;left:176.4px;top:193.45px;width:40px;text-align:center;transform:rotate(-90deg) scaleX(0.820);">20</span>
<span class="t" style="font-size:7.7px;color:#1a1a1a;left:176.4px;top:217.55px;width:40px;text-align:center;transform:rotate(-90deg) scaleX(0.820);">10</span>
<span class="t" style="font-size:7.7px;color:#1a1a1a;left:176.4px;top:241.65px;width:40px;text-align:center;transform:rotate(-90deg) scaleX(0.820);">0</span>
<span class="t" style="font-size:7.7px;color:#1a1a1a;left:176.4px;top:265.75px;width:40px;text-align:center;transform:rotate(-90deg) scaleX(0.820);">-10</span>
<span class="t" style="font-size:7.7px;color:#1a1a1a;left:176.4px;top:289.85px;width:40px;text-align:center;transform:rotate(-90deg) scaleX(0.820);">-20</span>
<span class="t" style="font-size:7.7px;color:#1a1a1a;left:176.4px;top:313.95px;width:40px;text-align:center;transform:rotate(-90deg) scaleX(0.820);">-30</span>
<span class="t" style="font-size:7.7px;color:#1a1a1a;left:176.4px;top:338.05px;width:40px;text-align:center;transform:rotate(-90deg) scaleX(0.820);">-40um</span>
<span class="t" style="font-size:7.7px;color:#111;left:204.3px;top:371.5px;transform-origin:0 50%;transform:scaleX(0.890);">00b_phaseAwareConnector</span>
<span class="t" style="font-size:9.5px;color:#111;left:292.2px;top:372.5px;transform-origin:0 50%;transform:scaleX(1.107);">*</span>
<span class="t" style="font-size:8.5px;color:#1a1a1a;left:2px;top:498px;transform-origin:0 50%;transform:scaleX(0.851);">x = -2.49187, y = -49.3892</span>
<span class="t" style="font-size:8.5px;color:#1a1a1a;left:524.4px;top:498px;transform-origin:0 50%;transform:scaleX(0.841);">[28,1]</span>
<span class="t" style="font-size:8.5px;color:#1a1a1a;left:699.4px;top:498px;transform-origin:0 50%;transform:scaleX(0.789);">Ready</span>
</body></html>
